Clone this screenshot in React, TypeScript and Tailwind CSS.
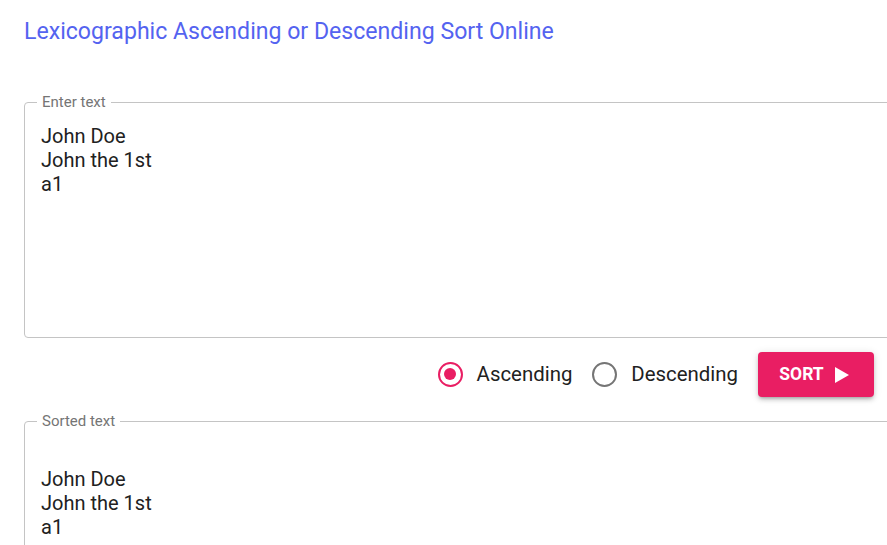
import React, { useState } from 'react';

const font = { fontFamily: 'Roboto, "Noto Sans", sans-serif' };

const Radio: React.FC<{ checked: boolean; label: string; onClick: () => void }> = ({ checked, label, onClick }) => (
  <button type="button" onClick={onClick} className="flex items-center gap-[14px] text-[20.4px] text-[#212121]">
    <span
      className={`flex h-[25px] w-[25px] items-center justify-center rounded-full border-[2.5px] ${
        checked ? 'border-[#e91e63]' : 'border-[#757575]'
      }`}
    >
      {checked && <span className="h-[12px] w-[12px] rounded-full bg-[#e91e63]" />}
    </span>
    <span>{label}</span>
  </button>
);

const OutlinedBox: React.FC<{ label: string; lines: string[]; height: string }> = ({ label, lines, height }) => (
  <fieldset className={`rounded border border-[#c4c4c4] pl-[16px] pt-[14px] ${height}`}>
    <legend className="ml-[-4px] px-[5px] text-[15px] leading-[16px] text-[#757575]">{label}</legend>
    <div className="text-[20px] leading-[24px] text-[#212121]">
      {lines.map((line, i) => (
        <div key={i} className="h-[24px]">
          {line}
        </div>
      ))}
    </div>
  </fieldset>
);

export default function App() {
  const [order, setOrder] = useState<'asc' | 'desc'>('asc');
  const input = ['John Doe', 'John the 1st', 'a1'];

  return (
    <div className="h-[545px] w-[887px] overflow-hidden bg-white" style={font}>
      <div className="w-[940px] pl-[24px] pt-[16px]">
        <h1 className="text-[23.1px] leading-[32px] text-[#5463f0]">Lexicographic Ascending or Descending Sort Online</h1>

        <div className="mt-[46px]">
          <OutlinedBox label="Enter text" lines={input} height="h-[244px]" />
        </div>

        <div className="mt-[14px] flex items-center justify-end gap-[20px] pr-[66px]">
          <Radio checked={order === 'asc'} label="Ascending" onClick={() => setOrder('asc')} />
          <Radio checked={order === 'desc'} label="Descending" onClick={() => setOrder('desc')} />
          <button
            type="button"
            className="flex h-[45px] w-[116px] items-center justify-center gap-[11px] rounded bg-[#e91e63] pr-[4px] text-[17.5px] font-bold text-white shadow-[0_3px_3px_-2px_rgba(0,0,0,0.2),0_3px_4px_0_rgba(0,0,0,0.14),0_1px_8px_0_rgba(0,0,0,0.12)]"
          >
            SORT
            <svg width="14" height="16" viewBox="0 0 14 16">
              <path d="M0 0 L14 8 L0 16 Z" fill="white" />
            </svg>
          </button>
        </div>

        <div className="mt-[16px]">
          <OutlinedBox label="Sorted text" lines={['', ...input]} height="h-[200px]" />
        </div>
      </div>
    </div>
  );
}
